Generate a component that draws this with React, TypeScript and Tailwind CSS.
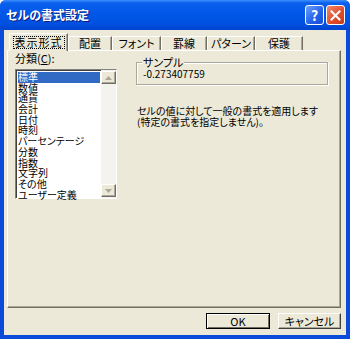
import React from "react";

const font = "font-['Noto_Sans_CJK_JP','Noto_Sans',sans-serif] [font-feature-settings:'palt']";

const TABS = [
  { label: "表示形式", width: 59 },
  { label: "配置", width: 44 },
  { label: "フォント", width: 49 },
  { label: "罫線", width: 46 },
  { label: "パターン", width: 48 },
  { label: "保護", width: 48 },
];

const CATEGORIES = ["標準", "数値", "通貨", "会計", "日付", "時刻", "パーセンテージ", "分数", "指数", "文字列", "その他", "ユーザー定義"];

function TitleBar() {
  return (
    <div className="flex h-[30px] items-center justify-between bg-[linear-gradient(to_bottom,#3D8FFF_0%,#0A5FEC_10%,#0157E8_45%,#0050E0_80%,#0044CF_100%)] pl-[6px] pr-[5px]">
      <span className="text-[12px] font-bold leading-none text-white [text-shadow:1px_1px_0_#0A1A80]">セルの書式設定</span>
      <div className="flex gap-[2px]">
        <div className="flex h-[20px] w-[19px] items-center justify-center rounded-[3px] border border-white bg-[linear-gradient(135deg,#6FA0FF,#2160E8_60%,#1A4FD0)] text-[14px] font-bold leading-none text-white">
          ?
        </div>
        <div className="flex h-[20px] w-[19px] items-center justify-center rounded-[3px] border border-white bg-[linear-gradient(135deg,#F08A70,#E0502F_55%,#C8391C)]">
          <svg width="11" height="11" viewBox="0 0 11 11">
            <path d="M1.5 1.5 L9.5 9.5 M9.5 1.5 L1.5 9.5" stroke="white" strokeWidth="2" strokeLinecap="square" />
          </svg>
        </div>
      </div>
    </div>
  );
}

function Tabs() {
  return (
    <div className="relative z-10 flex h-[17px] items-start pl-[2px]">
      {TABS.map((tab, i) =>
        i === 0 ? (
          <div
            key={tab.label}
            style={{ width: tab.width }}
            className="flex h-[18px] items-center justify-center rounded-tl-[2px] border-l border-t border-r border-l-white border-t-white border-r-[#716F64] bg-[#ECE9D8] shadow-[inset_-1px_0_0_#ACA899]"
          >
            <span className="border border-dotted border-black px-[1px] text-[11px] leading-[11px] tracking-[1px]">{tab.label}</span>
          </div>
        ) : (
          <div
            key={tab.label}
            style={{ width: tab.width }}
            className="mt-[3px] flex h-[14px] items-center justify-center rounded-tl-[2px] border-l border-t border-r border-l-white border-t-white border-r-[#716F64] shadow-[inset_-1px_0_0_#ACA899] text-[11px] leading-[11px]"
          >
            {tab.label}
          </div>
        )
      )}
    </div>
  );
}

function ScrollArrow({ up }: { up?: boolean }) {
  return (
    <div className="flex h-[13px] w-[15px] items-center justify-center border border-t-white border-l-white border-r-[#716F64] border-b-[#716F64] bg-[#ECE9D8] shadow-[inset_-1px_-1px_0_#ACA899]">
      <svg width="7" height="4" viewBox="0 0 7 4">
        <path d={up ? "M0 4 L3.5 0 L7 4 Z" : "M0 0 L3.5 4 L7 0 Z"} fill="#ACA899" />
      </svg>
    </div>
  );
}

function CategoryList() {
  return (
    <div className="mt-[4px] flex h-[130px] w-[102px] border border-t-[#808080] border-l-[#808080] border-r-white border-b-white bg-white shadow-[inset_1px_1px_0_#404040]">
      <div className="flex-1 pl-[2px] pt-[2px]">
        {CATEGORIES.map((c, i) => (
          <div
            key={c}
            className={`h-[10.7px] w-[82px] overflow-visible whitespace-nowrap text-[10px] leading-[10.7px] ${i === 0 ? "bg-[#316AC5] text-white" : "text-black"}`}
          >
            {c}
          </div>
        ))}
      </div>
      <div className="flex w-[15px] flex-col justify-between bg-[#F4F3EE] py-[1px]">
        <ScrollArrow up />
        <ScrollArrow />
      </div>
    </div>
  );
}

export default function App() {
  return (
    <div className={`flex h-[339px] w-[350px] flex-col overflow-hidden rounded-t-[6px] bg-[#0A4BDA] text-black ${font}`}>
      <TitleBar />
      <div className="mx-[4px] mb-[4px] flex flex-1 flex-col bg-[#ECE9D8] pl-[3px] pr-[5px] pt-[3px]">
        <Tabs />
        <div className="flex flex-1 border border-t-white border-l-white border-r-[#716F64] border-b-[#716F64] pl-[7px] pt-[1px] shadow-[inset_-1px_-1px_0_#ACA899]">
          <div className="flex flex-col">
            <div className="text-[11px] leading-[13px]">
              分類(<span className="underline">C</span>):
            </div>
            <CategoryList />
          </div>
          <div className="ml-[19px] flex flex-col">
            <div className="relative mt-[10px] h-[23px] w-[192px] border border-[#ACA899] px-[6px] pt-[4px] shadow-[inset_1px_1px_0_#fff,1px_1px_0_#fff]">
              <span className="absolute -top-[7px] left-[5px] bg-[#ECE9D8] px-[1px] text-[11px] leading-[13px]">サンプル</span>
              <div className="text-[10px] leading-[13px]">-0.273407759</div>
            </div>
            <div className="ml-[1px] mt-[20px] text-[10px] leading-[11px]">
              <div>セルの値に対して一般の書式を適用します</div>
              <div>(特定の書式を指定しません)。</div>
            </div>
          </div>
        </div>
        <div className="flex h-[27px] items-start justify-end gap-[8px] pt-[5px]">
          <button className="flex h-[16px] w-[64px] items-center justify-center border border-black bg-[#ECE9D8] text-[11px] leading-none shadow-[inset_1px_1px_0_#fff,inset_-1px_-1px_0_#716F64]">
            OK
          </button>
          <button className="flex h-[16px] w-[63px] items-center justify-center border border-t-white border-l-white border-r-[#404040] border-b-[#404040] bg-[#ECE9D8] text-[11px] leading-none shadow-[inset_-1px_-1px_0_#ACA899]">
            キャンセル
          </button>
        </div>
      </div>
    </div>
  );
}
